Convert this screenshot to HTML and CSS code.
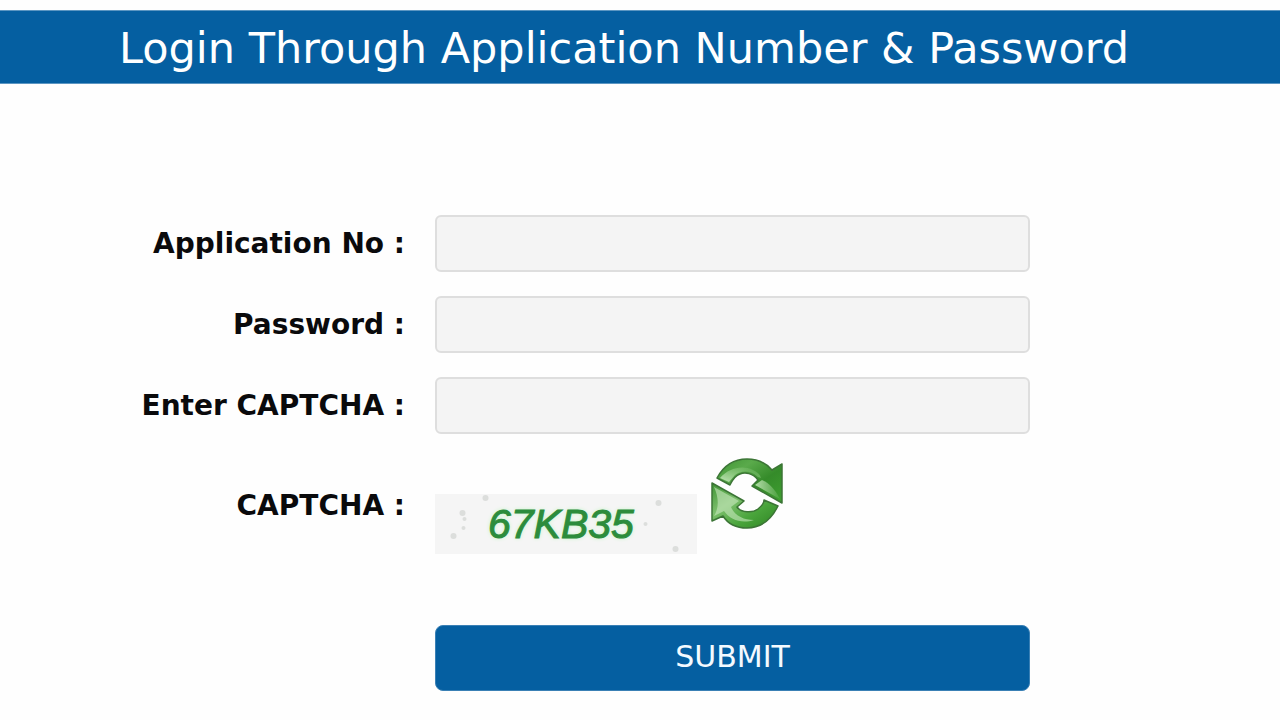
FILE: index.html
```html
<!DOCTYPE html>
<html lang="en">
<head>
<meta charset="utf-8">
<title>Login</title>
<link rel="stylesheet" href="styles.css">
</head>
<body>
<header class="banner">
  <h1 class="banner-title">Login Through Application Number &amp; Password</h1>
</header>
<form class="login">
  <label class="label" for="appno">Application No :</label>
  <input class="field" id="appno" type="text">
  <label class="label" for="password">Password :</label>
  <input class="field" id="password" type="password">
  <label class="label" for="captcha">Enter CAPTCHA :</label>
  <input class="field" id="captcha" type="text">
  <span class="label">CAPTCHA :</span>
  <div class="captcha">
    <div class="captcha-image">
      <svg class="specks" viewBox="0 0 261 60" aria-hidden="true">
        <g fill="#dcdedc">
          <circle cx="50" cy="4" r="3"/><circle cx="27" cy="19" r="3"/><circle cx="28" cy="34" r="2"/><circle cx="18" cy="42" r="3"/>
          <circle cx="29" cy="25" r="2"/><circle cx="223" cy="9" r="3"/><circle cx="210" cy="30" r="2"/><circle cx="240" cy="55" r="3"/>
        </g>
      </svg>
      <span class="captcha-code">67KB35</span>
    </div>
    <button class="refresh" type="button" aria-label="Refresh CAPTCHA">
      <svg class="refresh-icon" viewBox="0 0 72 72" aria-hidden="true">
        <defs>
          <linearGradient id="top" x1="0" y1="0" x2="1" y2="1">
            <stop offset="0" stop-color="#3f9434"/><stop offset=".3" stop-color="#5aaa4b"/><stop offset=".6" stop-color="#358b2a"/><stop offset="1" stop-color="#3fa030"/>
          </linearGradient>
          <linearGradient id="bottom" x1="0" y1="0" x2="1" y2="1">
            <stop offset="0" stop-color="#3f9434"/><stop offset=".35" stop-color="#7cbf6c"/><stop offset=".65" stop-color="#4aa53c"/><stop offset="1" stop-color="#2d8421"/>
          </linearGradient>
          <linearGradient id="shine" x1="0" y1="1" x2="1" y2="0">
            <stop offset="0" stop-color="#c2e5b8"/><stop offset="1" stop-color="#7fc36f" stop-opacity=".2"/>
          </linearGradient>
          <linearGradient id="tip" x1="0" y1="0" x2="1" y2="0">
            <stop offset="0" stop-color="#b4dda8"/><stop offset="1" stop-color="#b4dda8" stop-opacity=".1"/>
          </linearGradient>
        </defs>
        <g stroke="#3c7536" stroke-width="1.5" stroke-linejoin="round">
          <path fill="url(#top)" d="M6 20C13 7 24 1 36 1C47 1 55 5 61 12L71 6V45L41 28L47 22C42 15 34 14 29 16C23 18 21 23 19 27Z"/>
          <path fill="url(#bottom)" d="M1 25L33 43L26 49C30 55 42 55 47 51C51 48 53 45 53 42L67 48C59 64 48 70 36 70C25 70 17 66 12 58L1 63Z"/>
        </g>
        <path fill="url(#shine)" d="M9 20C18 10 31 7 42 12C46 14 49 16 50 20L47 19C40 12 30 12 24 17L18 24Z"/>
        <path fill="url(#tip)" d="M44 27L51 22C58 25 64 31 69 41Z"/>
        <path fill="#c8e8be" opacity=".6" d="M3 29L28 43L20 49C24 58 33 62 43 62C31 66 19 62 13 53L3 58C8 50 8 40 3 29Z"/>
      </svg>
    </button>
  </div>
  <button class="submit" type="submit">SUBMIT</button>
</form>
</body>
</html>
```
FILE: styles.css
```css
* {
  box-sizing: border-box;
}

body {
  margin: 0;
  padding-top: 10px;
  background: #fefefe;
  color: #0a0a0c;
  font-family: "DejaVu Sans", Verdana, sans-serif;
}

.banner {
  padding: 13px 32px 11px 0;
  background: #055fa1;
  border-top: 1px solid #5c96c2;
  border-bottom: 1px solid #5c96c2;
}

.banner-title {
  margin: 0;
  color: #fff;
  font-size: 43px;
  font-weight: 400;
  line-height: 48px;
  text-align: center;
}

.login {
  display: grid;
  grid-template-columns: 405fr 595fr;
  column-gap: 30px;
  row-gap: 24px;
  align-items: center;
  padding: 131px 250px 29px 0;
}

.label {
  font-size: 28px;
  font-weight: 700;
  line-height: 40px;
  text-align: right;
  white-space: nowrap;
}

.field {
  width: 100%;
  height: 57px;
  padding: 0 16px;
  background: #f4f4f4;
  border: 2px solid #dedede;
  border-radius: 6px;
  font-family: inherit;
  font-size: 28px;
}

.captcha {
  display: flex;
  align-items: flex-end;
  gap: 14px;
  height: 96px;
}

.captcha-image {
  position: relative;
  width: 262px;
  height: 60px;
  padding-left: 53px;
  background: #f5f5f5;
}

.specks {
  position: absolute;
  inset: 0;
  width: 100%;
  height: 100%;
}

.captcha-code {
  position: relative;
  color: #2c8c3c;
  font-family: "Liberation Sans", Arial, sans-serif;
  font-size: 41px;
  font-style: italic;
  line-height: 60px;
  text-shadow: 0 0 4px #b8f5b8;
  -webkit-text-stroke: 1px #2c8c3c;
}

.refresh {
  align-self: flex-start;
  padding: 0;
  background: none;
  border: 0;
}

.refresh-icon {
  display: block;
  width: 72px;
  height: 72px;
}

.submit {
  grid-column: 2;
  height: 66px;
  margin-top: 47px;
  padding: 0 0 3px;
  background: #055fa1;
  border: 1px solid #3a80b5;
  border-radius: 8px;
  color: #f4faff;
  font-family: inherit;
  font-size: 30px;
}
```
